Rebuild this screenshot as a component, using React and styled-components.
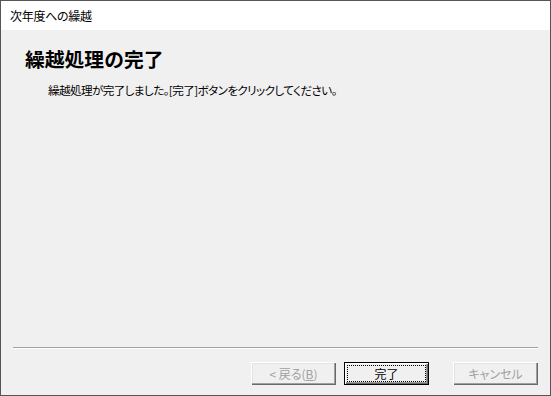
import React from "react";
import styled, { createGlobalStyle } from "styled-components";

const Global = createGlobalStyle`
  html, body { margin: 0; padding: 0; background: #f0f0f0; }
  body { font-family: "Noto Sans CJK JP", "Noto Sans", sans-serif; }
  * { box-sizing: border-box; }
`;

const Window = styled.div`
  width: 551px;
  height: 396px;
  border: 1px solid #555555;
  background: #f0f0f0;
  display: flex;
  flex-direction: column;
`;

const TitleBar = styled.div`
  height: 29px;
  background: #ffffff;
  display: flex;
  align-items: center;
  padding-left: 9px;
  font-size: 12px;
  color: #000;
  font-feature-settings: "palt";
  letter-spacing: -0.3px;
`;

const Content = styled.div`
  flex: 1;
  display: flex;
  flex-direction: column;
  padding: 18px 24px 0 24px;
`;

const Heading = styled.h1`
  margin: 0;
  font-size: 19.8px;
  line-height: 21px;
  font-weight: 700;
  color: #000;
`;

const Message = styled.p`
  margin: 14px 0 0 23px;
  font-size: 11.6px;
  line-height: 14px;
  color: #000;
  font-feature-settings: "palt";
  letter-spacing: -0.6px;
`;

const Footer = styled.div`
  display: flex;
  flex-direction: column;
  padding: 0 12px 10px 12px;
`;

const Separator = styled.div`
  height: 2px;
  border-top: 1px solid #a0a0a0;
  border-bottom: 1px solid #ffffff;
  margin-bottom: 13px;
`;

const ButtonRow = styled.div`
  display: flex;
  justify-content: flex-end;
`;

const Button = styled.button`
  width: 85px;
  height: 23px;
  margin-left: ${(p) => p.$gap || 0}px;
  padding: 0;
  background: #f0f0f0;
  border: none;
  border-radius: 0;
  font-family: "Noto Sans CJK JP", sans-serif;
  font-size: 12px;
  line-height: 14px;
  color: ${(p) => (p.disabled ? "#a0a0a0" : "#000")};
  font-feature-settings: "palt";
  box-shadow: ${(p) =>
    p.$default
      ? "inset 0 0 0 1px #000, inset 1px 1px 0 1px #ffffff, inset -1px -1px 0 1px #696969, inset -2px -2px 0 1px #a0a0a0"
      : "inset 1px 1px 0 #ffffff, inset -1px -1px 0 #696969, inset -2px -2px 0 #a0a0a0, inset 2px 2px 0 #e3e3e3"};
  display: flex;
  align-items: center;
  justify-content: center;
  cursor: default;
`;

const Focus = styled.span`
  display: flex;
  align-items: center;
  justify-content: center;
  width: calc(100% - 8px);
  height: calc(100% - 8px);
  outline: 1px dotted #000;
`;

const Mnemonic = styled.u`
  text-decoration: underline;
  text-underline-offset: 1px;
`;

export default function App() {
  return (
    <>
      <Global />
      <Window>
        <TitleBar>次年度への繰越</TitleBar>
        <Content>
          <Heading>繰越処理の完了</Heading>
          <Message>繰越処理が完了しました。[完了]ボタンをクリックしてください。</Message>
        </Content>
        <Footer>
          <Separator />
          <ButtonRow>
            <Button disabled>
              &lt;&nbsp;戻る(<Mnemonic>B</Mnemonic>)
            </Button>
            <Button $default $gap={8}>
              <Focus>完了</Focus>
            </Button>
            <Button disabled $gap={24}>
              キャンセル
            </Button>
          </ButtonRow>
        </Footer>
      </Window>
    </>
  );
}
